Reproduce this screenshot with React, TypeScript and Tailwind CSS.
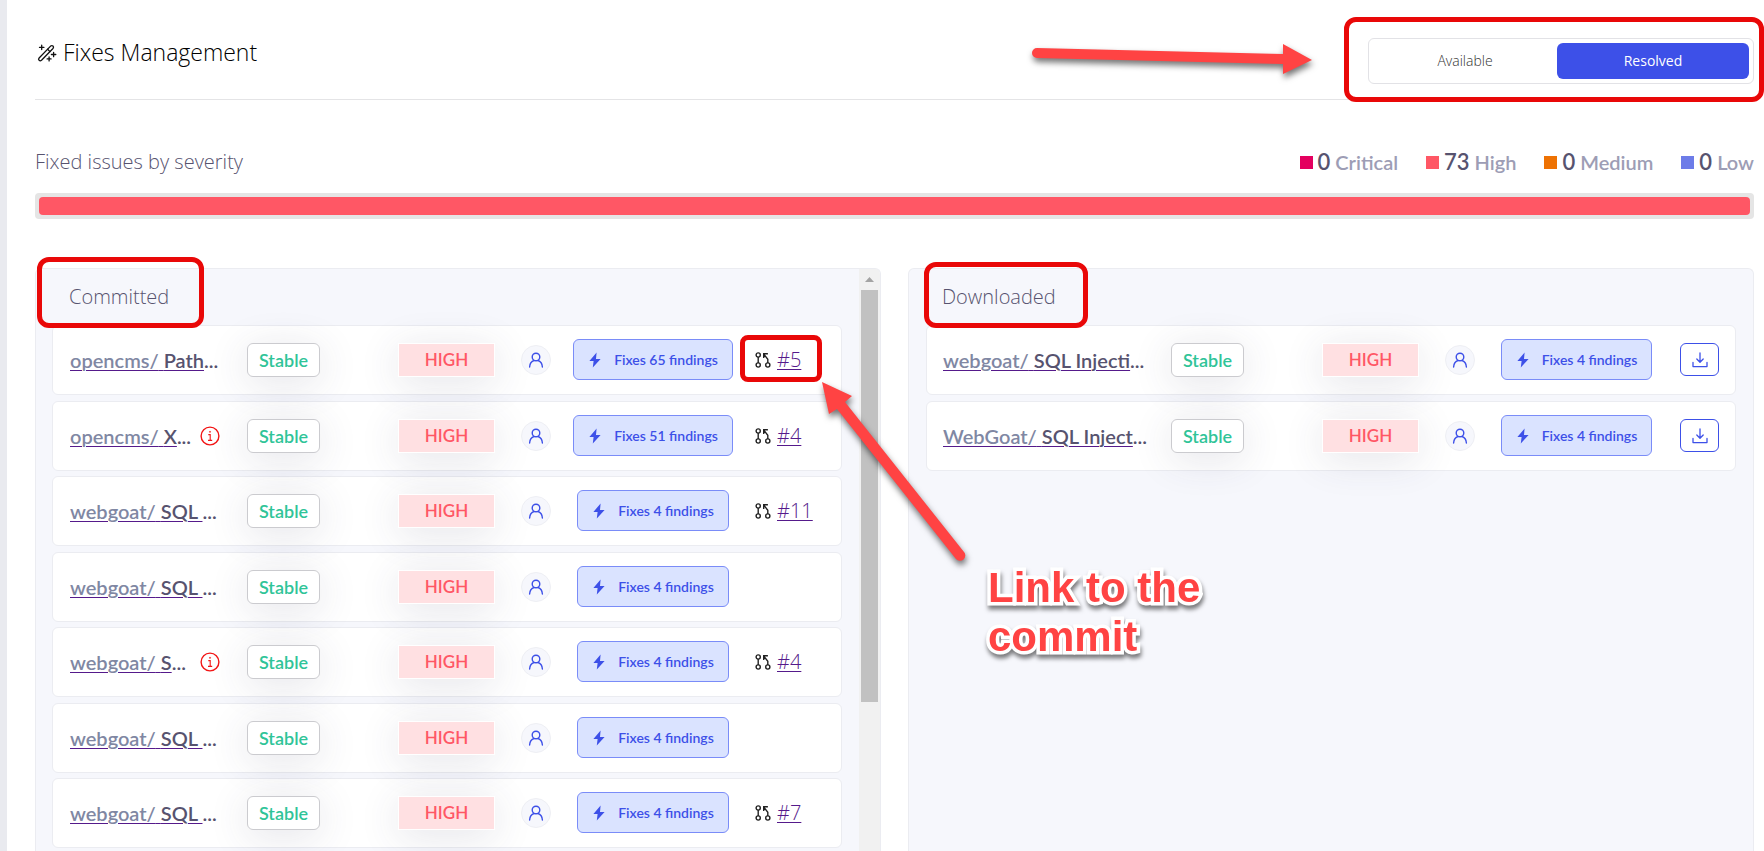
interface Fix {
  repo: string;
  issue: string;
  findings: number;
  info?: boolean;
  pr?: string;
}

const committed: Fix[] = [
  { repo: "opencms/", issue: "Path", findings: 65, pr: "#5" },
  { repo: "opencms/", issue: "X", findings: 51, info: true, pr: "#4" },
  { repo: "webgoat/", issue: "SQL ", findings: 4, pr: "#11" },
  { repo: "webgoat/", issue: "SQL ", findings: 4 },
  { repo: "webgoat/", issue: "S", findings: 4, info: true, pr: "#4" },
  { repo: "webgoat/", issue: "SQL ", findings: 4 },
  { repo: "webgoat/", issue: "SQL ", findings: 4, pr: "#7" },
];

const downloaded: Fix[] = [
  { repo: "webgoat/", issue: "SQL Injecti", findings: 4 },
  { repo: "WebGoat/", issue: "SQL Inject", findings: 4 },
];

const severities = [
  { label: "Critical", count: 0, color: "bg-[#e4005f]" },
  { label: "High", count: 73, color: "bg-[#ff5765]" },
  { label: "Medium", count: 0, color: "bg-[#ee7203]" },
  { label: "Low", count: 0, color: "bg-[#6d7ce8]" },
];

function WandIcon() {
  return (
    <svg width="20" height="20" viewBox="0 0 20 20" fill="none" stroke="#111" strokeWidth="1.3" strokeLinecap="round" strokeLinejoin="round">
      <path d="M2.1 15 13.6 3.1q1.3-1 2.4 0t0 2.4L4.5 17.3q-1.3 1-2.4 0t0-2.3Z" />
      <path d="m10.6 6.2 2.4 2.4" />
      <path d="M4.7 2.2v4.4M2.5 4.4h4.4M16.6 9.3v4.4M14.4 11.5h4.4M12.1 13.9v4M10.1 15.9h4" />
    </svg>
  );
}

function UserIcon() {
  return (
    <svg width="16" height="16" viewBox="0 0 16 16" fill="none" stroke="#3d50e8" strokeWidth="1.4" strokeLinecap="round">
      <circle cx="8" cy="5" r="3.8" />
      <path d="M1.6 15c.2-3.4 2.4-5.9 4.5-6.5M14.4 15c-.2-3.4-2.4-5.9-4.5-6.5" />
    </svg>
  );
}

function BoltIcon() {
  return (
    <svg width="12" height="16" viewBox="0 0 12 16" fill="#3d50e8">
      <path d="M7.6.4.4 8.9h4.2L3.8 15.6 11.6 7H7Z" />
    </svg>
  );
}

function PullRequestIcon() {
  return (
    <svg width="16" height="16" viewBox="0 0 16 16" fill="none" stroke="#222" strokeWidth="1.4">
      <circle cx="3.2" cy="3" r="2.1" />
      <circle cx="3.2" cy="13" r="2.1" />
      <circle cx="12.8" cy="13" r="2.1" />
      <path d="M3.2 5.1v5.8M12.8 10.9V7.2L9 2.4M8.7 6V1.8h4.2" />
    </svg>
  );
}

function DownloadIcon() {
  return (
    <svg width="16" height="16" viewBox="0 0 16 16" fill="none" stroke="#3d50e8" strokeWidth="1.3" strokeLinecap="round" strokeLinejoin="round">
      <path d="M8 1v9M4.8 7 8 10.2 11.2 7" />
      <path d="M1 10.4v4.2h14v-4.2" />
    </svg>
  );
}

function InfoIcon() {
  return (
    <svg width="20" height="20" viewBox="0 0 20 20" fill="none" stroke="#f21515" strokeWidth="1.4" className="shrink-0">
      <circle cx="10" cy="10" r="8.9" />
      <path d="M8.3 8.6h1.9v5.7M8 14.4h4.2" strokeWidth="1.1" />
      <circle cx="10" cy="5.8" r=".6" fill="#f21515" strokeWidth=".6" />
    </svg>
  );
}

function FixRow({ fix, kind }: { fix: Fix; kind: "committed" | "downloaded" }) {
  const columns =
    kind === "committed"
      ? "grid-cols-[minmax(0,1fr)_151px_123px_42px_180px_98px] pl-[17px]"
      : "grid-cols-[minmax(0,1fr)_151px_123px_42px_179px_69px] pl-4";

  return (
    <li className={`grid items-center h-[70px] rounded-md border border-[#ebecf1] bg-white odd:mb-1.5 even:mb-[5px] ${columns}`}>
      <div className="flex items-center justify-between pr-[27px]">
        <div className="text-xl font-semibold text-[#57536f] whitespace-nowrap">
          <a href="#" className="underline decoration-[#551a8b] decoration-1 underline-offset-2 whitespace-pre">
            <span className="text-[#8087a3]">{fix.repo} </span>
            {fix.issue}
          </a>
          ...
        </div>
        {fix.info && <InfoIcon />}
      </div>
      <div>
        <span className="flex items-center justify-center w-[73px] h-[34px] rounded-md border border-[#cbcbcf] bg-white text-lg font-semibold text-[#2fc498] shadow-[0_6px_40px_rgba(60,60,90,0.14)]">
          Stable
        </span>
      </div>
      <div>
        <span className="flex items-center justify-center w-[97px] h-[34px] border border-white bg-[#ffe0e2] text-[17px] font-semibold text-[#ff5765] shadow-[0_6px_40px_rgba(60,60,90,0.14)]">
          HIGH
        </span>
      </div>
      <div>
        <span className="flex items-center justify-center size-[30px] rounded-full border border-[#eeeff4] bg-[#f6f7fc]">
          <UserIcon />
        </span>
      </div>
      <div className="flex justify-center">
        <button className="flex items-center gap-3 h-[41px] px-3.5 rounded-md border border-[#7a8cf8] bg-[#dae3ff] text-sm font-semibold text-[#3d50e8] whitespace-nowrap">
          <span className="flex justify-center w-3.5">
            <BoltIcon />
          </span>
          Fixes {fix.findings} findings
        </button>
      </div>
      {kind === "committed" && fix.pr && (
        <div className="flex items-center gap-1.5 pl-3">
          <PullRequestIcon />
          <a href="#" className="font-['Open_Sans'] text-xl font-light text-[#551a8b] underline decoration-1 underline-offset-2">
            {fix.pr}
          </a>
        </div>
      )}
      {kind === "downloaded" && (
        <div className="pl-3.5">
          <button aria-label="Download" className="flex items-center justify-center w-[39px] h-[33px] rounded-md border border-[#3d50e8] bg-white">
            <DownloadIcon />
          </button>
        </div>
      )}
    </li>
  );
}

function Annotations() {
  return (
    <div className="absolute inset-0 pointer-events-none">
      <div className="absolute right-0 top-[17px] w-[420px] h-[85px] rounded-xl border-[5px] border-[#e90808]" />
      <div className="absolute left-[37px] top-[257px] w-[167px] h-[71px] rounded-xl border-[5px] border-[#e90808]" />
      <div className="absolute left-[924px] top-[262px] w-[164px] h-[66px] rounded-xl border-[5px] border-[#e90808]" />
      <div className="absolute left-[740px] top-[335px] w-[82px] h-[47px] rounded-lg border-[5px] border-[#e90808]" />
      <svg width="1764" height="851" className="absolute left-0 top-0 drop-shadow-[1px_4px_3px_rgba(0,0,0,0.55)]">
        <g fill="#ff4343">
          <path d="M1037 48 1283 54V44L1312 60 1283 74V64L1037 58A5 5 0 0 1 1037 48Z" />
          <path d="M822 382 852 396 845 402 964 552A5.2 5.2 0 0 1 956 559L837 409 829 414Z" />
        </g>
      </svg>
      <p className="absolute left-[988px] top-[563px] w-[240px] font-['Liberation_Sans'] text-[42px] leading-[49px] font-bold text-[#ff4343] [-webkit-text-stroke:7px_white] [paint-order:stroke_fill] drop-shadow-[1px_4px_2px_rgba(0,0,0,0.5)]">
        Link to the commit
      </p>
    </div>
  );
}

export default function App() {
  return (
    <div className="relative flex h-screen overflow-hidden bg-white font-[Lato,'Open_Sans',sans-serif]">
      <div className="w-[7px] shrink-0 bg-[#e9eaef]" />
      <main className="flex flex-col flex-1 min-w-0 pl-7 pr-2.5">
        <header className="flex items-center justify-between h-[100px] pt-[26px] border-b border-[#e4e4e6]">
          <h1 className="flex items-center gap-1.5 pl-0.5 pb-5 font-['Open_Sans'] text-[23px] font-light text-black">
            <WandIcon />
            Fixes Management
          </h1>
          <div className="flex w-[386px] h-[46px] p-1 mb-1 rounded-md border border-[#e2e2e6] font-['Open_Sans'] text-sm">
            <button className="flex-1 font-light text-[#333]">Available</button>
            <button className="w-48 rounded-md bg-[#3d50e8] text-white">Resolved</button>
          </div>
        </header>

        <div className="flex items-end justify-between mt-[47px]">
          <h2 className="pb-0.5 font-['Open_Sans'] text-xl font-light text-[#57536f]">Fixed issues by severity</h2>
          <ul className="flex gap-7">
            {severities.map((s) => (
              <li key={s.label} className="flex items-center gap-[5px] text-xl font-semibold text-[#9d9db5]">
                <span className={`size-[13px] ${s.color}`} />
                <span className="text-[22px] text-[#57536f]">{s.count}</span>
                {s.label}
              </li>
            ))}
          </ul>
        </div>
        <div className="mt-[15px] p-1 h-[26px] rounded-sm bg-[#e5e5e5]">
          <div className="h-full rounded-sm bg-[#ff5765]" />
        </div>

        <div className="grid grid-cols-2 flex-1 gap-[27px] min-h-0 mt-[49px]">
          <section className="flex min-w-0 rounded-t-md border border-b-0 border-[#ebecf1] bg-[#f6f7fc] overflow-hidden">
            <div className="flex-1 min-w-0 pl-4 pr-[17px]">
              <h3 className="h-14 pt-3.5 pl-[17px] font-['Open_Sans'] text-xl font-light text-[#57536f]">Committed</h3>
              <ul>
                {committed.map((fix, i) => (
                  <FixRow key={i} fix={fix} kind="committed" />
                ))}
              </ul>
            </div>
            <div className="w-[21px] px-0.5 bg-[#f1f1f1]">
              <div className="flex items-center justify-center h-[21px]">
                <svg width="9" height="5" viewBox="0 0 9 5" fill="#a3a3a3">
                  <path d="M0 5 4.5 0 9 5Z" />
                </svg>
              </div>
              <div className="h-[412px] bg-[#c1c1c1]" />
            </div>
          </section>

          <section className="min-w-0 px-[17px] rounded-t-md border border-b-0 border-[#ebecf1] bg-[#f6f7fc]">
            <h3 className="h-14 pt-3.5 pl-4 font-['Open_Sans'] text-xl font-light text-[#57536f]">Downloaded</h3>
            <ul>
              {downloaded.map((fix, i) => (
                <FixRow key={i} fix={fix} kind="downloaded" />
              ))}
            </ul>
          </section>
        </div>
      </main>
      <Annotations />
    </div>
  );
}
